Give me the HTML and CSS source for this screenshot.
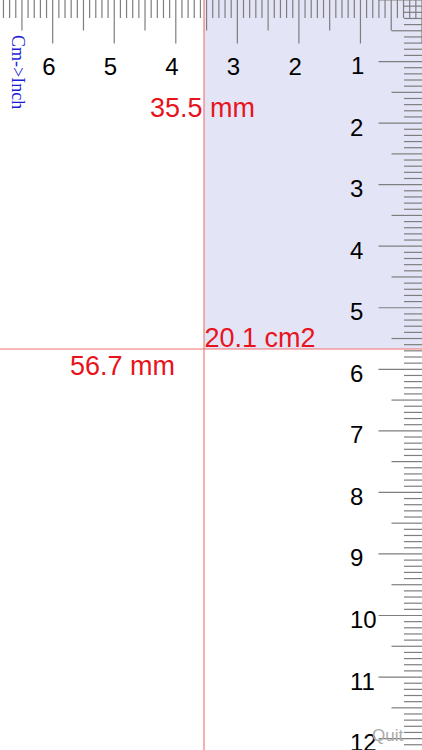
FILE: index.html
```html
<!DOCTYPE html>
<html lang="en">
<head>
<meta charset="utf-8">
<title>Ruler</title>
<link rel="stylesheet" href="styles.css">
</head>
<body>
<div class="screen">
  <svg class="canvas" width="422" height="750" viewBox="0 0 422 750">
    <rect class="area" x="204" y="0" width="218" height="349"/>
    <g id="ticks" class="ticks"></g>
    <g class="scale-labels">
      <text x="48.9" y="74.8" text-anchor="middle">6</text>
      <text x="110.45" y="74.8" text-anchor="middle">5</text>
      <text x="172" y="74.8" text-anchor="middle">4</text>
      <text x="233.55" y="74.8" text-anchor="middle">3</text>
      <text x="295.1" y="74.8" text-anchor="middle">2</text>
      <text x="351" y="74">1</text>
      <text x="350" y="135.6">2</text>
      <text x="350" y="197.1">3</text>
      <text x="350" y="258.7">4</text>
      <text x="350" y="320.2">5</text>
      <text x="350" y="381.8">6</text>
      <text x="350" y="443.3">7</text>
      <text x="350" y="504.9">8</text>
      <text x="350" y="566.4">9</text>
      <text x="350" y="628">10</text>
      <text x="350" y="689.5">11</text>
      <text x="350" y="750.5">12</text>
    </g>
    <line class="guide" x1="204" y1="0" x2="204" y2="750"/>
    <line class="guide" x1="0" y1="349" x2="422" y2="349"/>
    <text class="measure" x="202.5" y="117" text-anchor="middle">35.5 mm</text>
    <text class="measure" x="70" y="375">56.7 mm</text>
    <text class="measure" x="204.5" y="347">20.1 cm2</text>
  </svg>
  <div class="unit-toggle">Cm-&gt;Inch</div>
  <div class="quit">Quit</div>
</div>
<script src="script.js"></script>
</body>
</html>
```

FILE: styles.css
```css
html, body {
  margin: 0;
  padding: 0;
  background: #fff;
}

.screen {
  position: relative;
  width: 422px;
  height: 750px;
  overflow: hidden;
  background: #fff;
  font-family: "Liberation Sans", Arial, sans-serif;
}

.canvas {
  display: block;
}

.area {
  fill: #e4e4f7;
}

.ticks line {
  stroke: #7e7e7e;
  stroke-width: 1.2;
}

.scale-labels text {
  font-family: "Liberation Sans", Arial, sans-serif;
  font-size: 24px;
  fill: #000;
}

.guide {
  stroke: #f07070;
  stroke-width: 1.1;
}

.measure {
  font-family: "Liberation Sans", Arial, sans-serif;
  font-size: 27px;
  fill: #e8141c;
}

.unit-toggle {
  position: absolute;
  left: 26px;
  top: 35px;
  transform: rotate(90deg);
  transform-origin: 0 0;
  font-family: "Liberation Serif", "Times New Roman", serif;
  font-size: 18px;
  line-height: 17px;
  color: #1c1cd8;
  white-space: nowrap;
}

.quit {
  position: absolute;
  left: 372px;
  top: 727px;
  font-family: "Liberation Sans", Arial, sans-serif;
  font-size: 17px;
  line-height: 17px;
  color: #ababab;
}
```

FILE: script.js
```js
(function () {
  var NS = "http://www.w3.org/2000/svg";
  var ppm = 6.155;
  var g = document.getElementById("ticks");
  function len(k) {
    return k % 10 === 0 ? 43.5 : (k % 5 === 0 ? 30.5 : 18);
  }
  function add(x1, y1, x2, y2) {
    var l = document.createElementNS(NS, "line");
    l.setAttribute("x1", x1);
    l.setAttribute("y1", y1);
    l.setAttribute("x2", x2);
    l.setAttribute("y2", y2);
    g.appendChild(l);
  }
  var k, x, y;
  for (k = 0; (x = 422 - k * ppm) >= 0; k++) {
    add(x, 0, x, len(k));
  }
  for (k = 0; (y = k * ppm) <= 752; k++) {
    add(422 - len(k), y, 422, y);
  }
})();
```
